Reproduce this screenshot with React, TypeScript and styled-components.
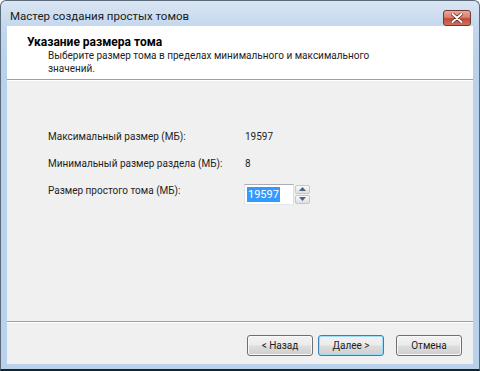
import styled, { createGlobalStyle } from 'styled-components';

const GlobalStyle = createGlobalStyle`
    html, body {
        margin: 0;
        padding: 0;
        background: #ffffff;
    }
    body {
        font-family: Roboto, 'Liberation Sans', Arial, sans-serif;
        font-size: 10px;
        color: #000000;
    }
`;

const WizardWindow = styled.div`
    width: 480px;
    height: 371px;
    box-sizing: border-box;
    display: flex;
    flex-direction: column;
    border: 1px solid #5a6a7a;
    border-bottom: 2px solid #10262e;
    border-radius: 6px 6px 0 0;
    background: linear-gradient(to bottom, #dae6f3 0px, #c4d8ee 24px, #b9d1ea 60px, #b9d1ea 100%);
    overflow: hidden;
`;

const TitleBar = styled.div`
    height: 25px;
    display: flex;
    flex-direction: row;
    align-items: center;
    justify-content: space-between;
    padding: 0 8px 0 9px;
    flex-shrink: 0;
`;

const TitleText = styled.span`
    font-size: 11.5px;
    color: #1b1b1b;
    margin-top: 5px;
`;

const CloseButton = styled.div`
    width: 26px;
    height: 14px;
    margin-top: 8px;
    display: flex;
    align-items: center;
    justify-content: center;
    border: 1px solid #6e3a34;
    border-radius: 3px;
    background: linear-gradient(to bottom, #e9a99c 0%, #d88170 45%, #c24a36 55%, #d3705c 100%);
`;

const ClientArea = styled.div`
    flex: 1;
    margin: 0 6px 5px 6px;
    display: flex;
    flex-direction: column;
    background: #f0f0f0;
`;

const Header = styled.div`
    height: 54px;
    background: #ffffff;
    padding: 9px 0 0 20px;
    box-sizing: border-box;
    border-bottom: 1px solid #a0a0a0;
    box-shadow: 0 1px 0 #ffffff;
    flex-shrink: 0;
`;

const HeaderTitle = styled.div`
    font-weight: bold;
    font-size: 12px;
    line-height: 14px;
`;

const HeaderSubtitle = styled.div`
    padding-left: 21px;
    line-height: 13px;
    color: #1e1e1e;
`;

const Body = styled.div`
    flex: 1;
    padding: 49px 0 0 41px;
    border-bottom: 1px solid #a0a0a0;
    box-shadow: 0 1px 0 #ffffff;
`;

const FieldGrid = styled.div`
    display: grid;
    grid-template-columns: 197px auto;
    grid-template-rows: 16px 16px 21px;
    row-gap: 11px;
    align-items: center;
`;

const FieldLabel = styled.span<{ $top?: boolean }>`
    color: #1e1e1e;
    line-height: 16px;
    white-space: nowrap;
    align-self: ${(p) => (p.$top ? 'start' : 'center')};
`;

const FieldValue = styled.span`
    color: #1e1e1e;
    line-height: 16px;
`;

const SpinBox = styled.div`
    display: flex;
    flex-direction: row;
    align-items: stretch;
    height: 21px;
    margin-top: 1px;
    margin-left: -1px;
`;

const SpinInput = styled.div`
    width: 50px;
    box-sizing: border-box;
    border: 1px solid #abadb3;
    border-top-color: #abadb3;
    border-left-color: #e2e3ea;
    border-right-color: #dbdfe6;
    border-bottom-color: #e3e9ef;
    background: #ffffff;
    padding: 2px 0 0 2px;
`;

const Selected = styled.span`
    background: #3399ff;
    color: #ffffff;
    font-size: 11px;
    line-height: 15px;
    display: inline-block;
    padding: 0 1px;
`;

const SpinButtons = styled.div`
    width: 15px;
    margin-left: 1px;
    padding: 1px 0;
    display: flex;
    flex-direction: column;
    gap: 1px;
`;

const SpinButton = styled.div`
    flex: 1;
    display: flex;
    align-items: center;
    justify-content: center;
    border: 1px solid #c3c8d0;
    border-radius: 2px;
    background: linear-gradient(to bottom, #fafafa 0%, #ececec 50%, #dedede 100%);
`;

const Footer = styled.div`
    height: 42px;
    display: flex;
    flex-direction: row;
    align-items: flex-start;
    justify-content: flex-end;
    padding: 13px 11px 0 0;
    box-sizing: border-box;
    flex-shrink: 0;
`;

const WizardButton = styled.div<{ $primary?: boolean; $gap?: number }>`
    width: 66px;
    height: 21px;
    box-sizing: border-box;
    margin-left: ${(p) => p.$gap ?? 0}px;
    display: flex;
    align-items: center;
    justify-content: center;
    border: 1px solid ${(p) => (p.$primary ? '#3c7fb1' : '#707070')};
    border-radius: 3px;
    background: linear-gradient(to bottom, #f2f2f2 0%, #ebebeb 48%, #dddddd 52%, #cfcfcf 100%);
    box-shadow: inset 0 0 0 1px ${(p) => (p.$primary ? '#9edcf8' : '#f8f8f8')};
    color: #1e1e1e;
    font-size: 10px;
`;

const ArrowIcon = ({ up }: { up?: boolean }) => (
    <svg width="7" height="4" viewBox="0 0 7 4">
        <path d={up ? 'M0 4 L3.5 0 L7 4 Z' : 'M0 0 L3.5 4 L7 0 Z'} fill="#4d6185" />
    </svg>
);

const CloseIcon = () => (
    <svg width="12" height="10" viewBox="0 0 12 10">
        <path d="M1.5 1 L10.5 9 M10.5 1 L1.5 9" stroke="#5b2620" strokeWidth="3.4" strokeLinecap="round" />
        <path d="M1.5 1 L10.5 9 M10.5 1 L1.5 9" stroke="#ffffff" strokeWidth="2" strokeLinecap="round" />
    </svg>
);

export default function App() {
    return (
        <>
            <GlobalStyle />
            <WizardWindow>
                <TitleBar>
                    <TitleText>Мастер создания простых томов</TitleText>
                    <CloseButton>
                        <CloseIcon />
                    </CloseButton>
                </TitleBar>
                <ClientArea>
                    <Header>
                        <HeaderTitle>Указание размера тома</HeaderTitle>
                        <HeaderSubtitle>
                            Выберите размер тома в пределах минимального и максимального
                            <br />
                            значений.
                        </HeaderSubtitle>
                    </Header>
                    <Body>
                        <FieldGrid>
                            <FieldLabel>Максимальный размер (МБ):</FieldLabel>
                            <FieldValue>19597</FieldValue>
                            <FieldLabel>Минимальный размер раздела (МБ):</FieldLabel>
                            <FieldValue>8</FieldValue>
                            <FieldLabel $top>Размер простого тома (МБ):</FieldLabel>
                            <SpinBox>
                                <SpinInput>
                                    <Selected>19597</Selected>
                                </SpinInput>
                                <SpinButtons>
                                    <SpinButton>
                                        <ArrowIcon up />
                                    </SpinButton>
                                    <SpinButton>
                                        <ArrowIcon />
                                    </SpinButton>
                                </SpinButtons>
                            </SpinBox>
                        </FieldGrid>
                    </Body>
                    <Footer>
                        <WizardButton>&lt; Назад</WizardButton>
                        <WizardButton $primary $gap={5}>Далее &gt;</WizardButton>
                        <WizardButton $gap={12}>Отмена</WizardButton>
                    </Footer>
                </ClientArea>
            </WizardWindow>
        </>
    );
}
